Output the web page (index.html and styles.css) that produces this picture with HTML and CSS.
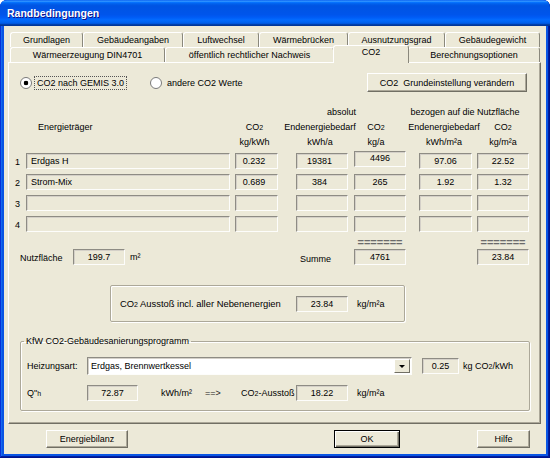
FILE: index.html
```html
<!DOCTYPE html>
<html lang="de">
  <head>
    <meta charset="UTF-8" />
    <title>Randbedingungen</title>
    <link rel="stylesheet" href="styles.css">
  </head>
  <body>
    <div class="window">
      <div class="titlebar">Randbedingungen</div>
      <div class="client">
        <div class="tabs">
          <div class="tabrow">
            <div class="tab t-grund">Grundlagen</div>
            <div class="tab t-geb">Gebäudeangaben</div>
            <div class="tab t-luft">Luftwechsel</div>
            <div class="tab t-waerme">Wärmebrücken</div>
            <div class="tab t-ausn">Ausnutzungsgrad</div>
            <div class="tab t-gew">Gebäudegewicht</div>
          </div>
          <div class="tabrow">
            <div class="tab t-erz">Wärmeerzeugung DIN4701</div>
            <div class="tab t-nachw">öffentlich rechtlicher Nachweis</div>
            <div class="tab active">CO2</div>
            <div class="tab t-opt">Berechnungsoptionen</div>
          </div>
        </div>

        <div class="panel">
          <div class="toprow">
            <span class="radio checked"></span>
            <span class="radio-label focus">CO2 nach GEMIS 3.0</span>
            <span class="radio second"></span>
            <span class="radio-label">andere CO2 Werte</span>
            <button class="btn btn-grund">CO2&nbsp; Grundeinstellung verändern</button>
          </div>

          <!-- column headers -->
          <div class="head head1">
            <span class="h-abs">absolut</span>
            <span class="h-rel">bezogen auf die Nutzfläche</span>
          </div>
          <div class="row head">
            <span class="num"></span>
            <span class="c-name h-name">Energieträger</span>
            <span class="c-fac">CO<span class="sub">2</span></span>
            <span class="c-abse">Endenergiebedarf</span>
            <span class="c-absc">CO<span class="sub">2</span></span>
            <span class="c-rele">Endenergiebedarf</span>
            <span class="c-relc">CO<span class="sub">2</span></span>
          </div>
          <div class="row head">
            <span class="num"></span>
            <span class="c-name"></span>
            <span class="c-fac">kg/kWh</span>
            <span class="c-abse">kWh/a</span>
            <span class="c-absc">kg/a</span>
            <span class="c-rele">kWh/m²a</span>
            <span class="c-relc">kg/m²a</span>
          </div>

          <div class="rows">
            <div class="row">
              <span class="num">1</span>
              <span class="c-name box left">Erdgas H</span>
              <span class="c-fac box">0.232</span>
              <span class="c-abse box">19381</span>
              <span class="c-absc box raised">4496</span>
              <span class="c-rele box">97.06</span>
              <span class="c-relc box">22.52</span>
            </div>
            <div class="row">
              <span class="num">2</span>
              <span class="c-name box left">Strom-Mix</span>
              <span class="c-fac box">0.689</span>
              <span class="c-abse box">384</span>
              <span class="c-absc box">265</span>
              <span class="c-rele box">1.92</span>
              <span class="c-relc box">1.32</span>
            </div>
            <div class="row">
              <span class="num">3</span>
              <span class="c-name box"></span>
              <span class="c-fac box"></span>
              <span class="c-abse box"></span>
              <span class="c-absc box"></span>
              <span class="c-rele box"></span>
              <span class="c-relc box"></span>
            </div>
            <div class="row">
              <span class="num">4</span>
              <span class="c-name box"></span>
              <span class="c-fac box"></span>
              <span class="c-abse box"></span>
              <span class="c-absc box"></span>
              <span class="c-rele box"></span>
              <span class="c-relc box"></span>
            </div>
          </div>

          <div class="row dashes">
            <span class="num"></span>
            <span class="c-name"></span>
            <span class="c-fac"></span>
            <span class="c-abse"></span>
            <span class="c-absc">=======</span>
            <span class="c-rele"></span>
            <span class="c-relc">=======</span>
          </div>
          <div class="row sumrow">
            <div class="nf">
              <span class="nf-label">Nutzfläche</span>
              <span class="box nf-box">199.7</span>
              <span class="nf-unit">m²</span>
            </div>
            <span class="c-fac"></span>
            <span class="c-abse summe">Summe</span>
            <span class="c-absc box">4761</span>
            <span class="c-rele"></span>
            <span class="c-relc box">23.84</span>
          </div>

          <div class="group ausstoss">
            <span class="aus-text">CO<span class="sub">2</span> Ausstoß incl. aller Nebenenergien</span>
            <span class="box w52">23.84</span>
            <span class="unit">kg/m²a</span>
          </div>

          <fieldset class="kfw">
            <legend>KfW CO2-Gebäudesanierungsprogramm</legend>
            <div class="kfw-row">
              <span class="kfw-label">Heizungsart:</span>
              <div class="select">
                <span class="select-text">Erdgas, Brennwertkessel</span>
                <span class="select-arrow"></span>
              </div>
              <span class="box w37">0.25</span>
              <span class="unit-co2">kg CO<span class="sub">2</span>/kWh</span>
            </div>
            <div class="kfw-row second">
              <span class="kfw-label">Q"<span class="sub">h</span></span>
              <span class="box w51">72.87</span>
              <span class="q-unit">kWh/m²</span>
              <span class="q-arrow">==&gt;</span>
              <span class="q-aus">CO<span class="sub">2</span>-Ausstoß</span>
              <span class="box w52">18.22</span>
              <span class="unit">kg/m²a</span>
            </div>
          </fieldset>
        </div>

        <div class="buttons">
          <button class="btn btn-bilanz">Energiebilanz</button>
          <button class="btn btn-ok">OK</button>
          <button class="btn btn-hilfe">Hilfe</button>
        </div>
      </div>
    </div>
  </body>
</html>
```

FILE: styles.css
```css
html,
body {
  margin: 0;
  padding: 0;
  background: #fff;
}

body {
  font-family: "Liberation Sans", Arial, sans-serif;
  font-size: 9px;
  color: #000;
}

.window {
  width: 550px;
  height: 458px;
  box-sizing: border-box;
  padding: 0 4px 4px;
  display: flex;
  flex-direction: column;
  background: #0a55e4;
  border-radius: 7px 7px 0 0;
  box-shadow: inset -1px -1px #00138c, inset 1px 1px #0831d9,
    inset -2px -2px #001ea0, inset 2px 2px #166aee;
}

.titlebar {
  height: 26px;
  margin: 0 -4px;
  padding-left: 7px;
  display: flex;
  align-items: center;
  color: #fff;
  font-weight: bold;
  font-size: 10.5px;
  text-shadow: 1px 1px #0f1089;
  border-radius: 7px 7px 0 0;
  background: linear-gradient(
    to bottom,
    #0058ee 0%,
    #3593ff 4%,
    #288eff 6%,
    #127dff 8%,
    #036ffc 10%,
    #0262ee 14%,
    #0057e5 20%,
    #0054e3 24%,
    #0055eb 56%,
    #005bf5 66%,
    #026afe 76%,
    #0062ef 86%,
    #0052d6 92%,
    #0040ab 94%,
    #003092 100%
  );
}

.client {
  flex: 1;
  background: #ece9d8;
}

/* tabs */
.tabs {
  padding: 6px 0 0 6px;
}

.tabrow {
  display: flex;
  height: 15px;
}

.tab {
  box-sizing: border-box;
  height: 15px;
  border-top: 1px solid #fff;
  border-left: 1px solid #fff;
  border-right: 1px solid #8a887c;
  border-radius: 3px 3px 0 0;
  background: #ece9d8;
  text-align: center;
  line-height: 14px;
  white-space: nowrap;
}

.t-grund { width: 73px; }
.t-geb { width: 100px; }
.t-luft { width: 76px; }
.t-waerme { width: 89px; }
.t-ausn { width: 97px; }
.t-gew { width: 95px; }
.t-erz { width: 155px; }
.t-nachw { width: 169px; }
.t-opt { width: 132px; }

.tab.active {
  width: 76px;
  height: 18px;
  margin: -2px -1px -1px;
  line-height: 13px;
  z-index: 1;
}

/* tab page */
.panel {
  margin-left: 4px;
  width: 533px;
  height: 362px;
  box-sizing: border-box;
  border: 1px solid;
  border-color: #fff #716f64 #716f64 #fff;
  box-shadow: inset -1px -1px #aca899;
}

.toprow {
  display: flex;
  align-items: center;
  height: 19px;
  margin-top: 10px;
  padding: 0 13px 0 11px;
}

.radio {
  width: 12px;
  height: 12px;
  box-sizing: border-box;
  border-radius: 50%;
  border: 1px solid #7a7a7a;
  background: #fff;
  flex-shrink: 0;
}

.radio.checked {
  background: radial-gradient(circle, #000 0 2px, #fff 2.6px);
}

.radio.second {
  margin-left: 23px;
}

.radio-label {
  margin-left: 2px;
  padding: 1px 2px;
  border: 1px dotted transparent;
}

.radio-label.focus {
  border-color: #555;
}

.btn {
  box-sizing: border-box;
  font: inherit;
  color: #000;
  padding: 0;
  background: #ece9d8;
  border: 1px solid;
  border-color: #fff #716f64 #716f64 #fff;
  box-shadow: inset -1px -1px #aca899;
}

.btn-grund {
  margin-left: auto;
  width: 160px;
  height: 19px;
}

/* table */
.head {
  line-height: 15px;
}

.head1 {
  margin-top: 13px;
}

.h-abs {
  display: inline-block;
  margin-left: 287px;
  width: 91px;
  text-align: center;
}

.h-rel {
  display: inline-block;
  margin-left: 13px;
  width: 125px;
  text-align: center;
}

.row {
  display: flex;
  align-items: center;
}

.row.head > span {
  display: flex;
  justify-content: center;
  align-items: baseline;
  white-space: nowrap;
  flex-shrink: 0;
}

.row.head > .h-name {
  justify-content: flex-start;
  padding-left: 12px;
  box-sizing: border-box;
}

.num {
  width: 17px;
  flex-shrink: 0;
  text-align: center;
  padding-top: 2px;
}

.c-name { width: 204px; }
.c-fac { width: 43px; margin-left: 5px; }
.c-abse { width: 52px; margin-left: 18px; }
.c-absc { width: 52px; margin-left: 6px; }
.c-rele { width: 53px; margin-left: 13px; }
.c-relc { width: 52px; margin-left: 5px; }

.row.head .c-fac,
.row.head .c-abse {
  padding-right: 4px;
  box-sizing: border-box;
}

.row.head .c-absc {
  padding-right: 8px;
  box-sizing: border-box;
}

.row.head .c-rele {
  padding-right: 3px;
  box-sizing: border-box;
}

.rows {
  margin-top: 3px;
  display: flex;
  flex-direction: column;
  gap: 5px;
}

.rows .row {
  height: 16px;
}

.box {
  box-sizing: border-box;
  height: 16px;
  flex-shrink: 0;
  display: flex;
  align-items: center;
  justify-content: center;
  border: 1px solid;
  border-color: #8e8c84 #fdfdfb #fdfdfb #8e8c84;
  box-shadow: inset 1px 1px #d4d0c8;
  white-space: nowrap;
}

.box.left {
  justify-content: flex-start;
  padding-left: 4px;
}

.rows .c-fac,
.rows .c-abse {
  padding-right: 5px;
}

.box.raised {
  align-self: flex-start;
  margin-top: -2px;
  padding-bottom: 2px;
}

.sub {
  font-size: 7px;
}

.dashes {
  margin-top: 5px;
  height: 10px;
  line-height: 10px;
}

.dashes span {
  text-align: center;
  font-size: 11px;
  font-weight: bold;
  color: #6a6a6a;
  overflow: hidden;
  white-space: nowrap;
}

.sumrow {
  margin-top: 2px;
  height: 16px;
}

.nf {
  width: 221px;
  display: flex;
  align-items: center;
}

.nf-label {
  margin-left: 11px;
  width: 53px;
  padding-top: 2px;
}

.nf-box {
  width: 52px;
}

.nf-unit {
  margin-left: 5px;
}

.summe {
  padding-left: 4px;
  padding-top: 4px;
  box-sizing: border-box;
}

/* group boxes */
.group {
  box-sizing: border-box;
  margin: 20px 0 0 101px;
  width: 295px;
  height: 37px;
  display: flex;
  align-items: center;
  padding-left: 9px;
  border: 1px solid #aca899;
  border-radius: 2px;
  box-shadow: inset 1px 1px #fff, 1px 1px #fff;
}

.aus-text {
  width: 176px;
  font-size: 9.4px;
  white-space: nowrap;
}

.w52 { width: 52px; }
.w51 { width: 51px; }
.w37 { width: 37px; }

.unit {
  margin-left: 9px;
}

.kfw {
  margin: 13px 0 0 11px;
  width: 510px;
  box-sizing: border-box;
  padding: 0 6px 9px;
  border: 1px solid #aca899;
  border-radius: 2px;
  box-shadow: inset 1px 1px #fff, 1px 1px #fff;
}

.kfw legend {
  padding: 0 2px;
  margin-left: -3px;
  line-height: 12px;
}

.kfw-row {
  display: flex;
  align-items: center;
  margin-top: 10px;
  height: 18px;
  white-space: nowrap;
}

.kfw-row.second {
  height: 16px;
}

.kfw-label {
  width: 60px;
  flex-shrink: 0;
}

.select {
  box-sizing: border-box;
  width: 325px;
  height: 18px;
  display: flex;
  align-items: center;
  background: #fff;
  border: 1px solid;
  border-color: #8e8c84 #fdfdfb #fdfdfb #8e8c84;
  box-shadow: inset 1px 1px #d4d0c8;
}

.select-text {
  flex: 1;
  padding-left: 3px;
}

.select-arrow {
  width: 16px;
  height: 14px;
  margin-right: 1px;
  box-sizing: border-box;
  background: #ece9d8;
  border: 1px solid;
  border-color: #fff #716f64 #716f64 #fff;
  display: flex;
  align-items: center;
  justify-content: center;
}

.select-arrow::after {
  content: "";
  border-left: 3px solid transparent;
  border-right: 3px solid transparent;
  border-top: 3px solid #000;
  margin-top: 1px;
}

.kfw-row .w37 {
  margin-left: 10px;
}

.unit-co2 {
  margin-left: 4px;
}

.q-unit {
  margin-left: 23px;
  width: 44px;
  flex-shrink: 0;
}

.q-arrow {
  width: 36px;
  flex-shrink: 0;
  color: #222;
}

.q-aus {
  width: 55px;
  flex-shrink: 0;
}

/* dialog buttons */
.buttons {
  display: flex;
  margin-top: 6px;
  padding-left: 42px;
}

.buttons .btn {
  height: 18px;
}

.btn-bilanz { width: 82px; }

.btn-ok {
  width: 66px;
  margin-left: 206px;
  border: 1px solid #000;
  box-shadow: inset 1px 1px #fff, inset -1px -1px #716f64, inset -2px -2px #aca899;
}

.btn-hilfe {
  width: 53px;
  margin-left: 77px;
}
```
